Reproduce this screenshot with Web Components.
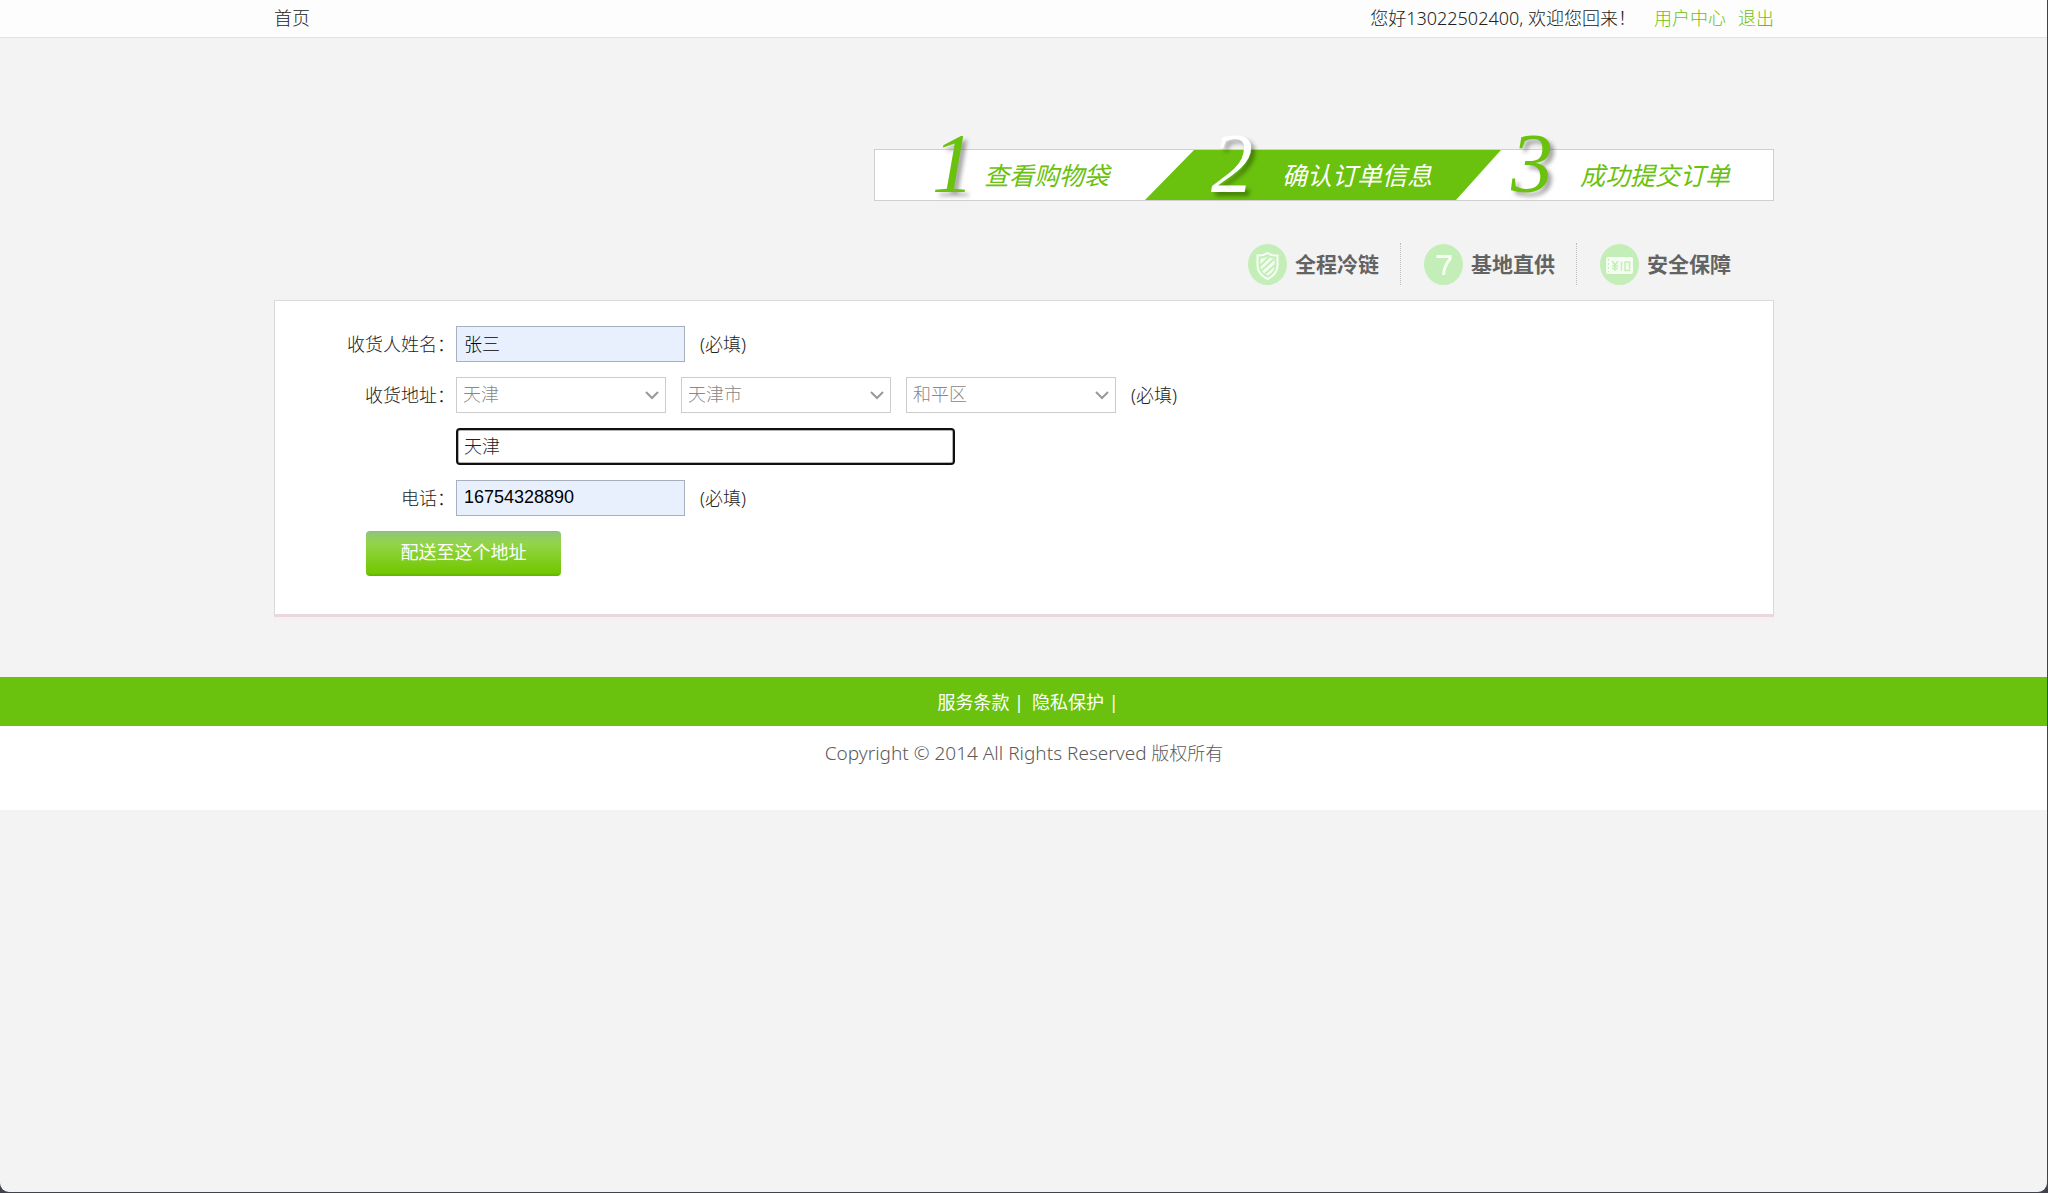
<!DOCTYPE html>
<html lang="zh-CN">
<head>
<meta charset="utf-8">
<title>确认订单信息</title>
<style>
  html { background: #f3f3f3; }
  body {
    margin: 0;
    font: 300 18px/24px "Noto Sans", "Noto Sans CJK SC", sans-serif;
    color: #222;
    --green: #6ac20e;
    --page: 1500px;
  }
</style>
</head>
<body>
<window-frame></window-frame>
<top-bar></top-bar>
<page-main>
  <step-banner slot="steps"></step-banner>
  <trust-badges slot="badges"></trust-badges>
  <address-form></address-form>
</page-main>
<page-footer></page-footer>

<script>
const define = (name, html) => {
  const template = document.createElement('template');
  template.innerHTML = html;
  customElements.define(name, class extends HTMLElement {
    constructor() {
      super();
      this.attachShadow({ mode: 'open' }).append(template.content.cloneNode(true));
    }
  });
};

define('window-frame', `
<style>
  :host { position: fixed; inset: 0; z-index: 10; pointer-events: none; overflow: hidden; }
  div { position: absolute; inset: 0 1px 1px 0; border-radius: 0 0 9px 9px; box-shadow: 0 0 0 12px #42424e; }
</style>
<div></div>`);

define('top-bar', `
<style>
  :host { display: block; background: #fdfdfd; border-bottom: 1px solid #e3e3e3; }
  nav { display: flex; align-items: center; box-sizing: border-box; max-width: var(--page); height: 37px; margin: 0 auto; padding-bottom: 1px; }
  a { color: inherit; text-decoration: none; }
  .hello { margin-left: auto; }
  .user { color: var(--green); margin-left: 12px; }
  .hello + .user { margin-left: 18px; }
</style>
<nav>
  <a href="#">首页</a>
  <span class="hello">您好13022502400, 欢迎您回来！</span>
  <a class="user" href="#">用户中心</a>
  <a class="user" href="#">退出</a>
</nav>`);

define('page-main', `
<style>
  :host { display: block; max-width: var(--page); margin: 0 auto; padding: 111px 0 60px; }
  .head { display: flex; flex-direction: column; align-items: flex-end; gap: 42px; margin-bottom: 15px; }
</style>
<main>
  <div class="head">
    <slot name="steps"></slot>
    <slot name="badges"></slot>
  </div>
  <slot></slot>
</main>`);

define('step-banner', `
<style>
  :host { display: block; }
  ol {
    display: grid; grid-template: 50px / 270px 356px 272px;
    margin: 0; padding: 0; list-style: none; background: #fff; border: 1px solid #d0d0d0;
  }
  li {
    display: flex; align-items: center; position: relative; white-space: nowrap;
    color: var(--green); font-style: italic; font-weight: 400; font-size: 25px; line-height: 36px;
  }
  li.on { color: #fff; }
  li.on::before {
    content: ""; position: absolute; inset: 0; background: var(--green);
    clip-path: polygon(49px 0, 100% 0, calc(100% - 45px) 100%, 0 100%);
  }
  b {
    position: relative; box-sizing: border-box; padding-bottom: 22px;
    font: italic 84px/50px "Liberation Serif", serif; text-shadow: 4px 4px 4px rgba(0,0,0,.35);
  }
  span { position: relative; }
  .one b { width: 109px; padding-left: 57px; }
  .two b { width: 137px; padding-left: 66px; }
  .three b { width: 79px; padding-left: 10px; }
</style>
<ol>
  <li class="one"><b>1</b><span>查看购物袋</span></li>
  <li class="two on"><b>2</b><span>确认订单信息</span></li>
  <li class="three"><b>3</b><span>成功提交订单</span></li>
</ol>`);

define('trust-badges', `
<style>
  :host { display: block; margin-right: 22px; }
  ul { display: flex; margin: 0; padding: 0; list-style: none; }
  li {
    display: flex; align-items: center; gap: 8px; height: 42px; padding: 0 21px 0 23px;
    font-weight: 700; font-size: 21px; line-height: 30px; color: #636363;
  }
  li + li { border-left: 1px dotted #bdbdbd; }
  svg { width: 39px; height: 41px; }
</style>
<ul>
  <li>
    <svg viewBox="0 0 39 41" aria-hidden="true">
      <ellipse cx="19.500" cy="20.500" rx="19.500" ry="20.500" fill="#c4eeb7"/>
      <path d="M19.500 9c-3 2-6 3-10 2.500v10c0 6 4 10.500 10 13.500 6-3 10-7.500 10-13.500v-10c-4 .5-7-.5-10-2.500z" fill="none" stroke="#f6fdf3" stroke-width="2"/>
      <path d="M12.500 14.500c3 0 5-.8 7-2 2 1.200 4 2 7 2v7.500c0 4-2.500 7-7 9.500-4.500-2.500-7-5.500-7-9.500z" fill="#f6fdf3"/>
      <path d="M12 22l9-9M13 27l13-12M17 30l10-9" stroke="#c4eeb7" stroke-width="2"/>
    </svg>全程冷链</li>
  <li>
    <svg viewBox="0 0 39 41" aria-hidden="true">
      <ellipse cx="19.500" cy="20.500" rx="19.500" ry="20.500" fill="#c4eeb7"/>
      <path d="M12.500 12.500h13.500v2.500c-4 4.500-6 9.500-6.500 16" fill="none" stroke="#f6fdf3" stroke-width="3"/>
    </svg>基地直供</li>
  <li>
    <svg viewBox="0 0 39 41" aria-hidden="true">
      <ellipse cx="19.500" cy="20.500" rx="19.500" ry="20.500" fill="#c4eeb7"/>
      <rect x="6" y="13" width="27" height="17" rx="2" fill="#f6fdf3"/>
      <path d="M8.500 15v13" stroke="#c4eeb7" stroke-dasharray="2 2"/>
      <path d="M12 17l3 4 3-4M15 21v6M12 22h6M12 24.500h6M21.500 17.500v9M25 18h4.500v8.500H25z" fill="none" stroke="#c4eeb7" stroke-width="1.500"/>
    </svg>安全保障</li>
</ul>`);

const fieldCss = `
  :host { display: block; }
  .row { display: flex; align-items: center; gap: 15px; }
  label { box-sizing: border-box; width: 181px; margin-right: -15px; padding-right: 1px; text-align: right; }
  label, span { padding-bottom: 1px; }
  input, select {
    box-sizing: border-box; height: 36px; margin: 0; padding: 0 7px 2px;
    font: 300 18px/24px "Liberation Sans", "Noto Sans CJK SC", sans-serif; color: #000;
    border: 1px solid #a9b0bd; border-radius: 0; background: #fff; outline: 0;
  }`;

customElements.define('text-field', class extends HTMLElement {
  connectedCallback() {
    const root = this.attachShadow({ mode: 'open' });
    root.innerHTML = `
<style>${fieldCss}
  input { width: 229px; background: #e8f0fe; }
  :host([wide]) input {
    width: 499px; height: 37px; color: #222; background: #fff; border: 2px solid #101010; border-radius: 4px;
    padding: 0 6px 3px; box-shadow: inset 0 0 0 1px #b5b5b5;
  }
</style>
<div class="row"><label for="field"></label><input id="field" type="text"><span></span></div>`;
    root.querySelector('label').textContent = this.getAttribute('label') || '';
    root.querySelector('input').value = this.getAttribute('value');
    root.querySelector('span').textContent = this.getAttribute('hint') || '';
    if (this.hasAttribute('wide')) root.querySelector('input').setAttribute('aria-label', '详细地址');
  }
});

define('region-field', `
<style>${fieldCss}
  .pick { display: grid; width: 210px; }
  .pick > * { grid-area: 1 / 1; }
  select { width: 100%; padding: 0 6px; appearance: none; color: #888; border-color: #ccc; opacity: 1; }
  svg { justify-self: end; align-self: center; width: 14px; height: 9px; margin-right: 7px; pointer-events: none; }
</style>
<div class="row">
  <label for="province">收货地址：</label>
  <div class="pick"><select id="province" disabled><option>天津</option></select><svg viewBox="0 0 14 9"><path d="M1 1l6 6 6-6" fill="none" stroke="#999" stroke-width="2"/></svg></div>
  <div class="pick"><select aria-label="城市" disabled><option>天津市</option></select><svg viewBox="0 0 14 9"><path d="M1 1l6 6 6-6" fill="none" stroke="#999" stroke-width="2"/></svg></div>
  <div class="pick"><select aria-label="区县" disabled><option>和平区</option></select><svg viewBox="0 0 14 9"><path d="M1 1l6 6 6-6" fill="none" stroke="#999" stroke-width="2"/></svg></div>
  <span>(必填)</span>
</div>`);

define('address-form', `
<style>
  :host { display: block; background: #fff; border: 1px solid #d9d9d9; border-bottom: 3px solid #e8d7db; box-shadow: 0 4px 0 #f7eff1; }
  form { display: flex; flex-direction: column; gap: 15px; padding: 25px 0 38px; }
  button {
    align-self: flex-start; width: 195px; height: 45px; margin-left: 91px; padding: 0 0 3px;
    border: 0; border-radius: 4px; color: #fff; font: inherit; font-weight: 400;
    background: linear-gradient(#9aacaa 0, #90c872 2px, #92d546 13px, #72c700 42px, #5fae08 45px);
  }
</style>
<form>
  <text-field label="收货人姓名：" value="张三" hint="(必填)"></text-field>
  <region-field></region-field>
  <text-field wide value="天津"></text-field>
  <text-field label="电话：" value="16754328890" hint="(必填)"></text-field>
  <button type="button">配送至这个地址</button>
</form>`);

define('page-footer', `
<style>
  :host { display: block; text-align: center; background: #fff; }
  nav { display: flex; justify-content: center; align-items: center; gap: 8px; height: 49px; padding-left: 8px; font-weight: 400; color: #fff; background: var(--green); }
  a { color: inherit; text-decoration: none; }
  p { margin: 0; padding: 15px 0 45px; color: #5a5a5a; }
  .latin { font-size: 19px; }
</style>
<footer>
  <nav><span><a href="#">服务条款</a> |</span><span><a href="#">隐私保护</a> |</span></nav>
  <p><span class="latin">Copyright © 2014 All Rights Reserved</span> 版权所有</p>
</footer>`);
</script>
</body>
</html>
